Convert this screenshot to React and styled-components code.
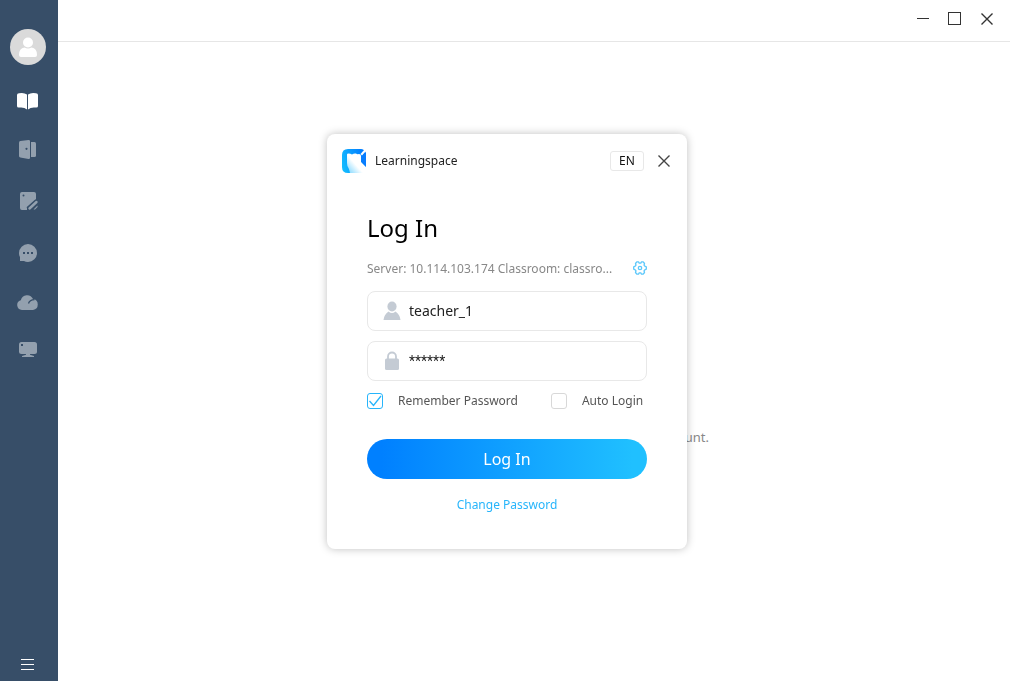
import React, { useState } from 'react';
import styled, { createGlobalStyle } from 'styled-components';

const GlobalStyle = createGlobalStyle`
    * {
        box-sizing: border-box;
    }
    body {
        margin: 0;
        background: #fff;
        font-family: "Noto Sans", "Open Sans", sans-serif;
        font-size: 12px;
        color: #222;
    }
    button, input {
        font-family: inherit;
    }
`
const Container = styled.div`
    display: flex;
    min-height: 100vh;
`
const Sidebar = styled.nav`
    width: 58px;
    padding: 29px 2px 0 0;
    display: flex;
    flex-direction: column;
    align-items: center;
    background: #374e68;
`
const IconButton = styled.button`
    display: flex;
    align-items: center;
    justify-content: center;
    padding: 0;
    border: none;
    background: none;
    cursor: pointer;
`
const Avatar = styled(IconButton)`
    width: 36px;
    height: 36px;
    margin-bottom: 11px;
    border-radius: 50%;
    background: #dadada;
`
const NavButton = styled(IconButton)`
    width: 56px;
    height: 50px;
    color: ${props => props.$active ? "#fff" : "#93a0ae"};
`
const MenuButton = styled(NavButton)`
    height: 33px;
    margin-top: auto;
`
const Main = styled.main`
    flex: 1;
    display: flex;
    flex-direction: column;
`
const TitleBar = styled.header`
    height: 42px;
    padding: 0 7px 4px;
    display: flex;
    justify-content: flex-end;
    border-bottom: 1px solid #e6e6e6;
`
const WindowButton = styled(IconButton)`
    width: 32px;
    color: #333;
`
const Content = styled.div`
    flex: 1;
    display: flex;
    align-items: center;
    justify-content: center;
    padding-top: 150px;
`
const Notice = styled.p`
    width: 350px;
    margin: 0;
    font-size: 13px;
    line-height: 20px;
    text-align: right;
    color: #888;
`
const Overlay = styled.div`
    position: fixed;
    inset: 0;
    display: flex;
    align-items: center;
    justify-content: center;
    padding: 2px 0 0 4px;
`
const Dialog = styled.section`
    width: 360px;
    background: #fff;
    border-radius: 8px;
    box-shadow: 0 0 8px rgba(0, 0, 0, 0.25);
`
const DialogHeader = styled.div`
    height: 53px;
    padding: 0 13px 0 15px;
    display: flex;
    align-items: center;
`
const AppName = styled.span`
    flex: 1;
    margin-left: 9px;
    line-height: 20px;
`
const LangButton = styled.button`
    width: 34px;
    height: 20px;
    margin-right: 10px;
    padding: 0;
    border: 1px solid #e8e8e8;
    border-radius: 3px;
    background: #fff;
    font-size: 12px;
    line-height: 18px;
    color: #111;
`
const CloseButton = styled(IconButton)`
    width: 20px;
    height: 20px;
    color: #444;
`
const Form = styled.form`
    padding: 21px 40px 34px;
    display: flex;
    flex-direction: column;
`
const Title = styled.h1`
    margin: 0 0 10px;
    font-size: 24px;
    font-weight: 400;
    line-height: 40px;
    color: #000;
`
const ServerRow = styled.div`
    display: flex;
    align-items: center;
    justify-content: space-between;
    height: 20px;
    margin-bottom: 13px;
    color: #888;
`
const Field = styled.label`
    height: 40px;
    margin-bottom: 10px;
    padding: 0 15px;
    display: flex;
    align-items: center;
    gap: 7px;
    border: 1px solid #e8e8e8;
    border-radius: 8px;
    color: #c4cbd4;
`
const Input = styled.input`
    flex: 1;
    min-width: 0;
    padding: 0;
    border: none;
    outline: none;
    background: none;
    font-family: ${props => props.$masked ? "Roboto, sans-serif" : "inherit"};
    font-size: 14px;
    line-height: 20px;
    color: #222;
`
const Options = styled.div`
    display: flex;
    gap: 33px;
    height: 20px;
`
const Option = styled.label`
    display: flex;
    align-items: center;
    gap: 15px;
    line-height: 20px;
    color: #555;
`
const CheckWrap = styled.span`
    display: grid;
    width: 16px;
    height: 16px;

    > * {
        grid-area: 1 / 1;
    }
    svg {
        pointer-events: none;
    }
`
const Checkbox = styled.input`
    appearance: none;
    width: 16px;
    height: 16px;
    margin: 0;
    border: 1px solid #d8d8d8;
    border-radius: 3px;
    background: #fff;

    &:checked {
        border-color: #27b5fb;
    }
`
const SubmitButton = styled.button`
    height: 40px;
    margin-top: 28px;
    border: none;
    border-radius: 20px;
    background: linear-gradient(90deg, #0080ff 5%, #20c0ff 95%);
    font-size: 16px;
    color: #fff;
    cursor: pointer;
`
const ChangeLink = styled.a`
    align-self: center;
    margin-top: 16px;
    line-height: 20px;
    color: #27b5fb;
    text-decoration: none;
`

const Svg = ({ w = 28, h = w, children }) => (
    <svg width={w} height={h} viewBox={`0 0 ${w} ${h}`} fill="currentColor" aria-hidden="true">
        {children}
    </svg>
)

const BookIcon = () => (
    <Svg>
        <path d="M3 8Q3 6.500 5 6.200Q10 5.200 13 7.500V22.500Q10 19.800 5 20.600Q3 20.800 3 19Z" />
        <path d="M24 8Q24 6.500 22 6.200Q17 5.200 14 7.500V22.500Q17 19.800 22 20.600Q24 20.800 24 19Z" />
    </Svg>
)

const DoorIcon = () => (
    <Svg>
        <path d="M5 5.500Q5 4.200 6.300 4L14.500 3Q16 2.900 16 4.200V20.800Q16 22.200 14.500 22L6.300 20.600Q5 20.300 5 19Z" />
        <path d="M17 5H20.500Q22 5 22 6.500V18.500Q22 20 20.500 20H17Z" />
        <circle cx="12.500" cy="11.800" r="1.100" fill="#374e68" />
    </Svg>
)

const NoteIcon = () => (
    <Svg>
        <path d="M8 5H20Q22 5 22 7V12.500L13 20.500V23H8Q6 23 6 21V7Q6 5 8 5Z" />
        <circle cx="9.500" cy="8.500" r="1" fill="#374e68" />
        <path d="M14 22L23 14" stroke="#374e68" strokeWidth="4.500" />
        <path d="M15.500 21.500L22.500 15" stroke="currentColor" strokeWidth="2.400" strokeLinecap="round" />
        <path d="M19.500 22.500H21L23.500 20V18.500Z" />
    </Svg>
)

const ChatIcon = () => (
    <Svg>
        <path d="M14 7A9 9 0 1 1 14 25Q11.500 25 10 24H6V20Q5 18.500 5 16A9 9 0 0 1 14 7Z" />
        <path d="M9 15h2v2h-2zM13 15h2v2h-2zM17 15h2v2h-2z" fill="#374e68" />
    </Svg>
)

const CloudIcon = () => (
    <Svg>
        <path d="M8 23A5 5 0 0 1 6.800 13.200A6.500 6.500 0 0 1 19 12.100A5.500 5.500 0 0 1 19 23Z" />
        <path d="M14.500 16.500Q15.500 12.800 20.500 12.600" stroke="#374e68" strokeWidth="1.300" fill="none" />
    </Svg>
)

const MonitorIcon = () => (
    <Svg>
        <path d="M7.500 5H20.500Q23 5 23 7.500V14.500Q23 17 20.500 17H7.500Q5 17 5 14.500V7.500Q5 5 7.500 5Z" />
        <path d="M12 17H16V17.800L20 19V20H8V19L12 17.800Z" />
        <path d="M7 7h2v2h-2z" fill="#374e68" />
    </Svg>
)

const CrossIcon = () => (
    <Svg w={14}>
        <path d="M1.500 1.500L12.500 12.500M12.500 1.500L1.500 12.500" stroke="currentColor" strokeWidth="1.400" />
    </Svg>
)

const Logo = () => (
    <svg width="24" height="24" viewBox="0 0 24 24" aria-hidden="true">
        <defs>
            <linearGradient id="logoBg" x1="0" y1="0.600" x2="1" y2="0.300">
                <stop offset="0" stopColor="#12baff" />
                <stop offset="1" stopColor="#0078ff" />
            </linearGradient>
            <linearGradient id="logoFade" x1="0.700" y1="0.500" x2="0.150" y2="1">
                <stop offset="0.300" stopColor="#fff" />
                <stop offset="1" stopColor="#8fdcff" />
            </linearGradient>
        </defs>
        <path d="M6 0H19Q22 0 24 4V18Q24 24 18 24H6Q0 24 0 18V6Q0 0 6 0Z" fill="url(#logoBg)" />
        <path d="M5 5.500Q5 4.500 6.500 4.500Q8.500 4.500 10 5.500Q12 4 14 4.500Q15 5.500 17 5Q19 5 19 7V13L24 18V24H8Q7.500 21 6.500 19Q5 17 5 14Z" fill="url(#logoFade)" />
        <path d="M18.500 5L22.500 0.500L24 2L20 6.500Z" fill="#fff" />
        <path d="M24 3.500V17.500L19.500 12.500V8Z" fill="#087dff" />
    </svg>
)

const GearIcon = () => (
    <Svg w={14}>
        <g fill="none" stroke="#5cc8fb" strokeWidth="1.300" strokeLinejoin="round">
            <path d="M3.800 0.800H5.500L6.200 2.200H7.800L8.500 0.800H10.200L11.500 2.500L11 4.200L11.800 5.200L13.300 5.800V8.200L11.800 8.800L11 9.800L11.500 11.500L10.200 13.200H8.500L7.800 11.800H6.200L5.500 13.200H3.800L2.500 11.500L3 9.800L2.200 8.800L0.700 8.200V5.800L2.200 5.200L3 4.200L2.500 2.500Z" />
            <circle cx="7" cy="7" r="1.700" />
        </g>
    </Svg>
)

const UserIcon = () => (
    <Svg w={19} h={20}>
        <ellipse cx="9" cy="5.500" rx="4.600" ry="5" />
        <path d="M0.500 19Q1 13.500 5.500 10.500Q9 13.500 12.500 10.500Q17 13.500 17.500 19Z" />
    </Svg>
)

const LockIcon = () => (
    <Svg w={19} h={20}>
        <path d="M3.500 7.500H14.500Q16 7.500 16 9V17.500Q16 19 14.500 19H3.500Q2 19 2 17.500V9Q2 7.500 3.500 7.500Z" />
        <path d="M5 8.500V5.500A4 4 0 0 1 13 5.500V8.500" fill="none" stroke="currentColor" strokeWidth="1.800" />
    </Svg>
)

const navItems = [
    { label: "Classes", Icon: BookIcon, active: true },
    { label: "Classroom", Icon: DoorIcon },
    { label: "Notes", Icon: NoteIcon },
    { label: "Messages", Icon: ChatIcon },
    { label: "Cloud", Icon: CloudIcon },
    { label: "Screen", Icon: MonitorIcon },
]

const CheckOption = ({ label, checked, onChange }) => (
    <Option>
        <CheckWrap>
            <Checkbox type="checkbox" checked={checked} onChange={e => onChange(e.target.checked)} />
            {checked && (
                <Svg w={16}>
                    <path d="M2.500 8L6.500 12.500L14 3" fill="none" stroke="#27b5fb" strokeWidth="1.300" />
                </Svg>
            )}
        </CheckWrap>
        {label}
    </Option>
)

const LoginDialog = () => {
    const [user, setUser] = useState("teacher_1");
    const [password, setPassword] = useState("******");
    const [remember, setRemember] = useState(true);
    const [auto, setAuto] = useState(false);

    return (
        <Dialog role="dialog" aria-labelledby="login-title">
            <DialogHeader>
                <Logo />
                <AppName>Learningspace</AppName>
                <LangButton type="button">EN</LangButton>
                <CloseButton type="button" aria-label="Close dialog"><CrossIcon /></CloseButton>
            </DialogHeader>
            <Form onSubmit={e => e.preventDefault()}>
                <Title id="login-title">Log In</Title>
                <ServerRow>
                    <span>Server: 10.114.103.174 Classroom: classro...</span>
                    <IconButton type="button" aria-label="Server settings"><GearIcon /></IconButton>
                </ServerRow>
                <Field>
                    <UserIcon />
                    <Input aria-label="User name" value={user} onChange={e => setUser(e.target.value)} />
                </Field>
                <Field>
                    <LockIcon />
                    <Input $masked aria-label="Password" value={password} onChange={e => setPassword(e.target.value)} />
                </Field>
                <Options>
                    <CheckOption label="Remember Password" checked={remember} onChange={setRemember} />
                    <CheckOption label="Auto Login" checked={auto} onChange={setAuto} />
                </Options>
                <SubmitButton type="submit">Log In</SubmitButton>
                <ChangeLink href="#change-password">Change Password</ChangeLink>
            </Form>
        </Dialog>
    )
}

const App = () => {
    return (
        <Container>
            <GlobalStyle />
            <Sidebar>
                <Avatar aria-label="Account">
                    <Svg w={36}>
                        <circle cx="18" cy="13.500" r="5" fill="#fff" />
                        <path d="M9 26Q9 19 14.500 18.500Q18 20.500 21.500 18.500Q27 19 27 26Q27 28 25 28H11Q9 28 9 26Z" fill="#fff" />
                    </Svg>
                </Avatar>
                {navItems.map(({ label, Icon, active }) => (
                    <NavButton key={label} aria-label={label} $active={active}><Icon /></NavButton>
                ))}
                <MenuButton aria-label="Menu" $active>
                    <Svg w={14} h={11}>
                        <path d="M0 0H13V1H0ZM0 5H13V6H0ZM0 10H13V11H0Z" />
                    </Svg>
                </MenuButton>
            </Sidebar>
            <Main>
                <TitleBar>
                    <WindowButton aria-label="Minimize">
                        <Svg w={12} h={13}><path d="M0 6H12V7H0Z" /></Svg>
                    </WindowButton>
                    <WindowButton aria-label="Maximize">
                        <Svg w={14} h={13}><path d="M0 0H13V13H0ZM1 1V12H12V1Z" fillRule="evenodd" /></Svg>
                    </WindowButton>
                    <WindowButton aria-label="Close window"><CrossIcon /></WindowButton>
                </TitleBar>
                <Content>
                    <Notice>unt.</Notice>
                </Content>
            </Main>
            <Overlay>
                <LoginDialog />
            </Overlay>
        </Container>
    )
}

export default App
